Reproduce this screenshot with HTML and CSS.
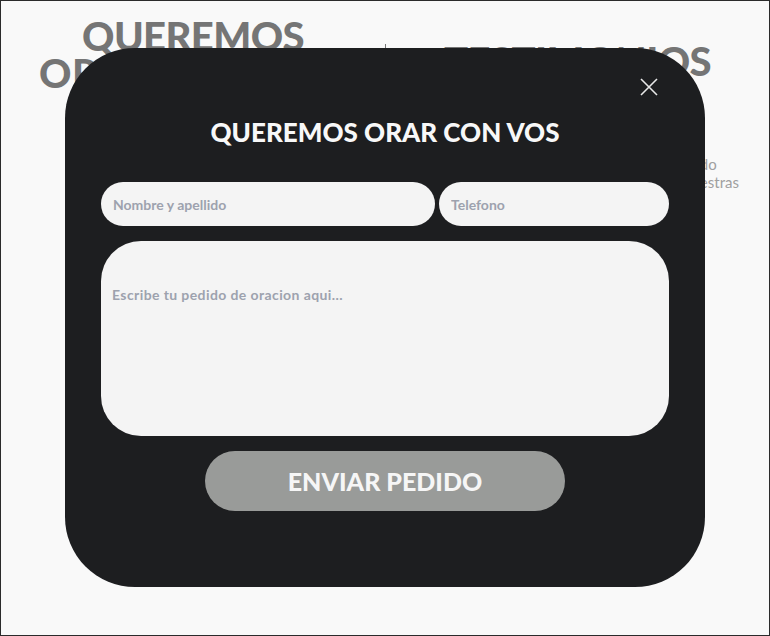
FILE: index.html
```html
<!DOCTYPE html>
<html lang="es">
<head>
<meta charset="utf-8">
<title>Queremos orar con vos</title>
<link rel="stylesheet" href="styles.css">
</head>
<body>
<div class="page">
  <header class="hero">
    <section class="col col-left">
      <h1 class="big">QUEREMOS<br><span class="wide">ORAR CON VOS</span></h1>
    </section>
    <div class="divider"></div>
    <section class="col col-right">
      <h1 class="big">TESTIMONIOS</h1>
      <p class="lead"><span class="l1">Mirá y conocé lo que Dios viene haciendo</span><br>en las vidas de todas las amadas familias nuestras</p>
    </section>
  </header>

  <div class="modal">
    <button class="close" aria-label="Cerrar">
      <svg width="18" height="18" viewBox="0 0 18 18"><path d="M1 1 L17 17 M17 1 L1 17" stroke="#e8e8e8" stroke-width="1.6" fill="none"/></svg>
    </button>
    <h2 class="title">QUEREMOS ORAR CON VOS</h2>
    <form class="form">
      <div class="row">
        <input class="field name" type="text" placeholder="Nombre y apellido">
        <input class="field phone" type="text" placeholder="Telefono">
      </div>
      <textarea class="area" placeholder="Escribe tu pedido de oracion aqui..."></textarea>
      <button type="button" class="send">ENVIAR PEDIDO</button>
    </form>
  </div>
</div>
</body>
</html>
```
FILE: styles.css
```css
* { box-sizing: border-box; }
html, body { margin: 0; padding: 0; }
body {
  font-family: "Lato", "Noto Sans", sans-serif;
  background: #f9f9f9;
}
.page {
  position: relative;
  width: 770px;
  height: 636px;
  border: 1px solid #2b2b2b;
  background: #f9f9f9;
  overflow: hidden;
}
.hero {
  display: flex;
  padding-top: 17px;
}
.col {
  text-align: center;
}
.col-left { flex: 0 0 384px; }
.col-right { flex: 1; padding-top: 25px; }
.divider {
  width: 1px;
  height: 40px;
  margin-top: 26px;
  background: #777;
}
.big {
  margin: 0;
  font-size: 40px;
  line-height: 37px;
  font-weight: 900;
  color: #757575;
  letter-spacing: -0.6px;
  white-space: nowrap;
}
.wide { letter-spacing: 0.6px; }
.lead {
  margin: 75px 0 0;
  font-size: 15px;
  line-height: 18px;
  color: #a0a0a0;
  white-space: nowrap;
}
.l1 { letter-spacing: 0.15px; }

.modal {
  position: absolute;
  left: 64px;
  top: 47px;
  width: 640px;
  height: 539px;
  background: #1d1e20;
  border-radius: 70px;
  padding: 0 36px;
  display: flex;
  flex-direction: column;
  align-items: center;
}
.close {
  position: absolute;
  right: 47px;
  top: 30px;
  width: 18px;
  height: 18px;
  padding: 0;
  border: 0;
  background: none;
}
.close svg { display: block; }
.title {
  margin: 69px 0 0;
  color: #f8f8f8;
  font-size: 26px;
  line-height: 30px;
  font-weight: 900;
  letter-spacing: 0;
}
.form {
  width: 100%;
  display: flex;
  flex-direction: column;
  align-items: center;
  margin-top: 35px;
}
.row {
  display: flex;
  gap: 4px;
  width: 100%;
}
.field {
  height: 44px;
  border: 0;
  border-radius: 22px;
  background: #f4f4f4;
  padding: 0 12px;
  font-family: "Lato", sans-serif;
  font-weight: 700;
  font-size: 14px;
  color: #333;
  outline: none;
}
.name { width: 334px; }
.phone { flex: 1; }
::placeholder { color: #9da2ae; opacity: 1; }
.area {
  margin-top: 15px;
  width: 100%;
  height: 195px;
  border: 0;
  border-radius: 40px;
  background: #f4f4f4;
  padding: 45px 11px 10px;
  font-family: "Lato", sans-serif;
  font-weight: 700;
  font-size: 14px;
  letter-spacing: 0.4px;
  resize: none;
  outline: none;
}
.send {
  margin-top: 15px;
  width: 360px;
  height: 60px;
  border: 0;
  border-radius: 30px;
  background: #999b99;
  color: #f6f6f6;
  font-family: "Lato", sans-serif;
  font-weight: 900;
  font-size: 25px;
  line-height: 56px;
  padding-bottom: 2px;
  letter-spacing: 0;
}
```
